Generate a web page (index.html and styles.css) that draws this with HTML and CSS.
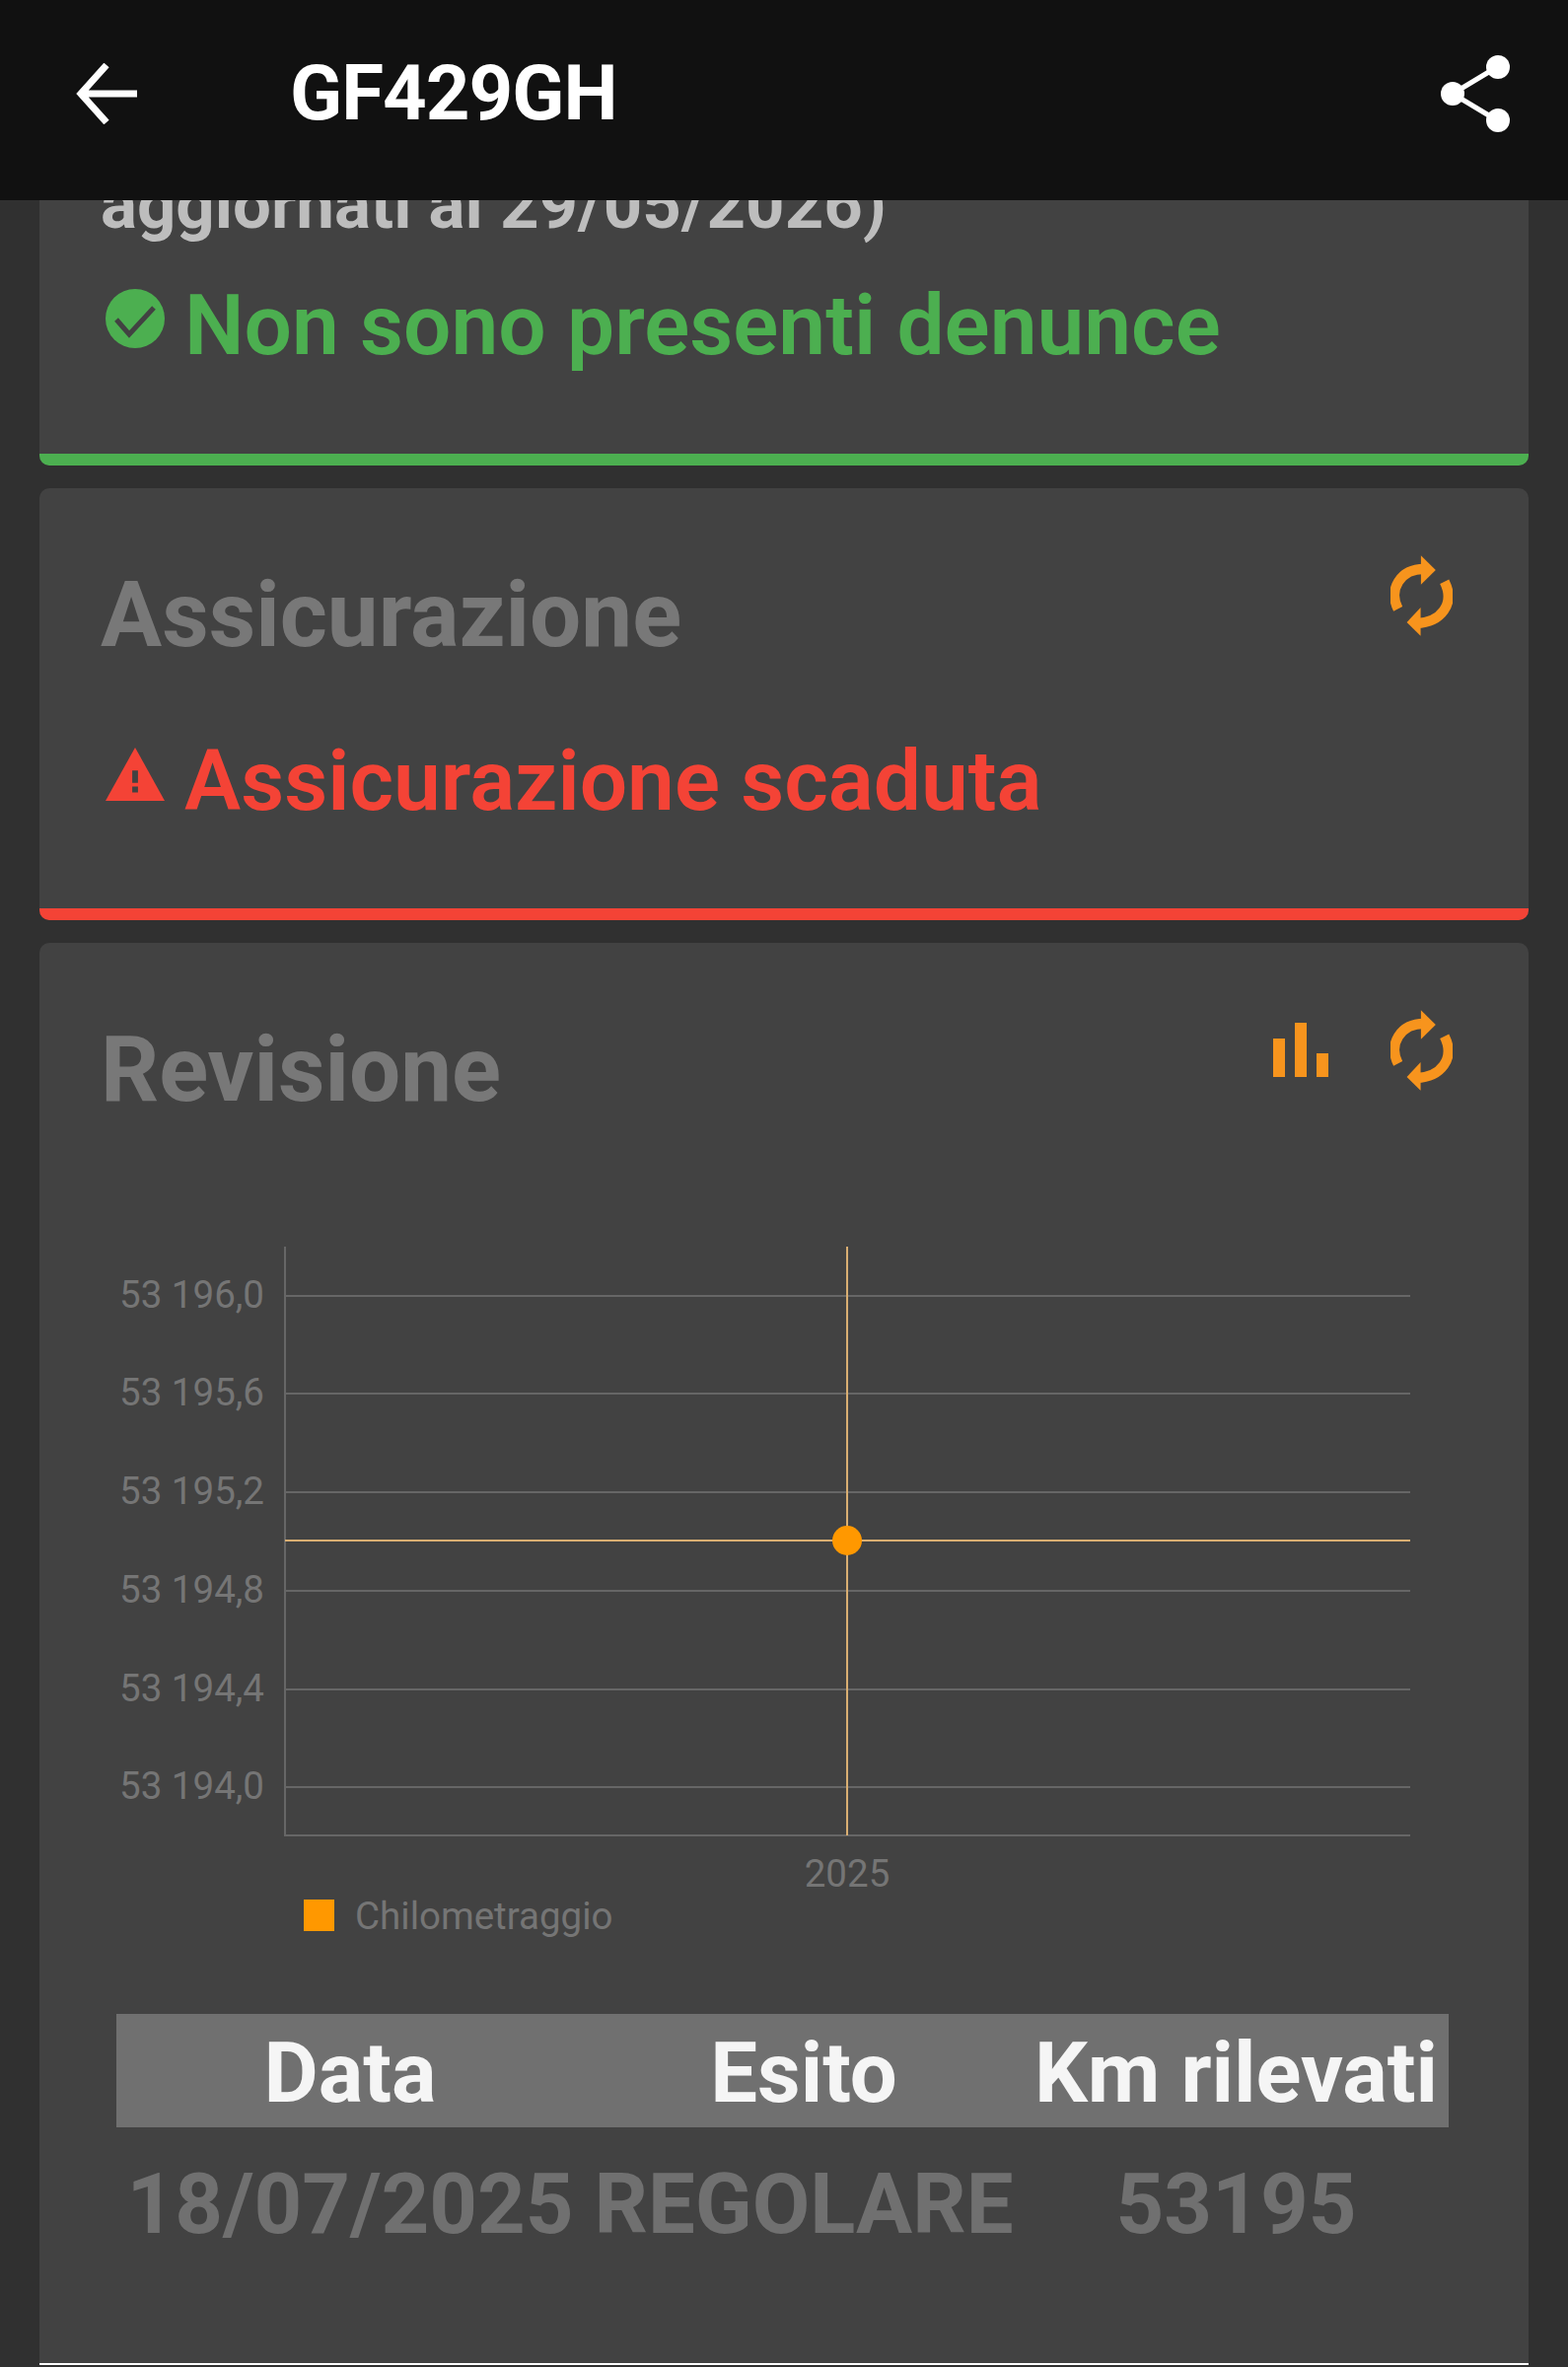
FILE: index.html
```html
<!DOCTYPE html>
<html lang="it">
<head>
    <meta charset="UTF-8">
    <meta name="viewport" content="width=device-width, initial-scale=1.0">
    <title>GF429GH</title>
    <link rel="stylesheet" href="styles.css">
</head>
<body>
    <header class="top-bar">
        <svg class="icon-back" viewBox="0 0 62 62"><path d="M62 31H5M31 2L5 31l26 29" fill="none" stroke="#fff" stroke-width="7"/></svg>
        <h1 class="plate">GF429GH</h1>
        <svg class="icon-share" viewBox="0 0 70 78">
            <path d="M57 12L12 39l45 27" fill="none" stroke="#fff" stroke-width="5"/>
            <circle cx="58" cy="12" r="12" fill="#fff"/>
            <circle cx="12" cy="39" r="12" fill="#fff"/>
            <circle cx="58" cy="66" r="12" fill="#fff"/>
        </svg>
    </header>

    <main class="cards">
        <!-- page is scrolled, first card is cut by the top bar -->
        <section class="card card-denunce">
            <p class="updated">aggiornati al 29/05/2026)</p>
            <div class="status status-ok">
                <svg class="status-icon" viewBox="0 0 60 60">
                    <ellipse cx="30" cy="30" rx="30" ry="30" fill="#4caf50"/>
                    <path d="M11 31l13 15 25-27" fill="none" stroke="#424242" stroke-width="5"/>
                </svg>
                <span>Non sono presenti denunce</span>
            </div>
            <div class="bar bar-green"></div>
        </section>

        <section class="card card-assicurazione">
            <div class="card-head">
                <h2>Assicurazione</h2>
                <svg class="icon-sync" viewBox="478 60 198 260">
                    <path d="M502 232C470 170 510 105 585 105" fill="none" stroke="#f7941d" stroke-width="32"/>
                    <path d="M575 62l47 46-47 47z" fill="#f7941d"/>
                    <path d="M650 145C685 215 640 275 560 278" fill="none" stroke="#f7941d" stroke-width="32"/>
                    <path d="M574 228l-44 47 44 43z" fill="#f7941d"/>
                </svg>
            </div>
            <div class="status status-bad">
                <svg class="status-icon" viewBox="0 0 62 56">
                    <path d="M31 0l31 56H0z" fill="#f44336"/>
                    <path d="M28 24h6v13h-6zM28 41h6v6h-6z" fill="#424242"/>
                </svg>
                <span>Assicurazione scaduta</span>
            </div>
            <div class="bar bar-red"></div>
        </section>

        <section class="card card-revisione">
            <div class="card-head">
                <h2>Revisione</h2>
                <svg class="icon-bars" viewBox="0 0 56 55">
                    <path d="M0 16h12v39H0zM22 0h12v55H22zM44 31h12v24H44z" fill="#f7941d"/>
                </svg>
                <svg class="icon-sync" viewBox="478 60 198 260">
                    <path d="M502 232C470 170 510 105 585 105" fill="none" stroke="#f7941d" stroke-width="32"/>
                    <path d="M575 62l47 46-47 47z" fill="#f7941d"/>
                    <path d="M650 145C685 215 640 275 560 278" fill="none" stroke="#f7941d" stroke-width="32"/>
                    <path d="M574 228l-44 47 44 43z" fill="#f7941d"/>
                </svg>
            </div>

            <svg class="chart" viewBox="0 0 1400 740">
                <g class="grid">
                    <path d="M209 50H1350M209 149H1350M209 249H1350M209 349H1350M209 449H1350M209 548H1350"/>
                    <path d="M209 0V597H1350"/>
                </g>
                <g class="y-labels">
                    <text x="188" y="62">53 196,0</text>
                    <text x="188" y="161">53 195,6</text>
                    <text x="188" y="261">53 195,2</text>
                    <text x="188" y="361">53 194,8</text>
                    <text x="188" y="461">53 194,4</text>
                    <text x="188" y="560">53 194,0</text>
                </g>
                <path class="cross" d="M209 298H1350M779 0V597"/>
                <circle cx="779" cy="298" r="15" fill="#ff9800"/>
                <text class="x-label" x="779" y="649">2025</text>
                <rect x="228" y="662" width="31" height="32" fill="#ff9800"/>
                <text class="legend-label" x="280" y="692">Chilometraggio</text>
            </svg>

            <table class="km-table">
                <thead>
                    <tr><th class="col-data">Data</th><th class="col-esito">Esito</th><th class="col-km">Km rilevati</th></tr>
                </thead>
                <tbody>
                    <tr><td>18/07/2025</td><td>REGOLARE</td><td>53195</td></tr>
                </tbody>
            </table>
            <div class="bar bar-white"></div>
        </section>
    </main>
</body>
</html>
```

FILE: styles.css
```css
/* dark theme page, Roboto everywhere */
html, body {
    margin: 0;
    height: 2400px;
    overflow: hidden;
    background-color: #303030;
    font-family: Roboto, "Liberation Sans", sans-serif;
}

.top-bar {
    height: 203px;
    background-color: #111;
    display: flex;
    align-items: center;
    padding: 0 59px 14px 77px;
    box-sizing: border-box;
}
.icon-back {
    width: 62px;
    height: 62px;
}
.plate {
    margin: 0 0 0 155px;
    flex: 1;
    color: #fff;
    font-size: 78px;
    line-height: 90px;
    font-weight: 700;
    letter-spacing: -1px;
}
.icon-share {
    width: 70px;
    height: 78px;
}

.cards {
    display: flex;
    flex-direction: column;
    gap: 23px;
    padding: 0 40px;
}
.card {
    background-color: #424242;
    border-radius: 0 0 10px 10px;
    overflow: hidden;
    display: flex;
    flex-direction: column;
}
.card-assicurazione, .card-revisione {
    border-radius: 10px;
}
.card-denunce { height: 269px; }
.card-assicurazione { height: 438px; }
.card-revisione { height: 1442px; border-radius: 10px 10px 0 0; }

.updated {
    margin: -40px 0 0 62px;
    height: 90px;
    color: #bdbdbd;
    font-size: 69px;
    line-height: 90px;
    font-weight: 700;
    white-space: nowrap;
}
.status {
    display: flex;
    align-items: center;
    gap: 20px;
    margin-left: 67px;
    font-size: 85.6px;
    line-height: 100px;
    font-weight: 600;
    white-space: nowrap;
}
.status-icon {
    width: 60px;
    height: 60px;
    margin-bottom: 14px;
}
.status-ok { color: #4caf50; margin-top: 27px; }
.status-bad { color: #f44336; margin-top: 65px; }

.bar {
    height: 12px;
    margin-top: auto;
}
.bar-green { background-color: #4caf50; }
.bar-red { background-color: #f44336; }
.bar-white { background-color: #fff; height: 2px; }

.card-head {
    display: flex;
    align-items: flex-start;
    padding: 66px 77px 0 62px;
}
.card-head h2 {
    margin: 10px 0 0;
    flex: 1;
    color: #787878;
    font-size: 92.5px;
    line-height: 106px;
    font-weight: 700;
}
.icon-sync {
    width: 63px;
    height: 86px;
}
.icon-bars {
    width: 56px;
    height: 55px;
    margin: 15px 63px 0 0;
}

.chart {
    display: block;
    width: 1400px;
    height: 740px;
    margin: 126px 0 0 40px;
}
.grid path {
    fill: none;
    stroke: #666;
    stroke-width: 2;
}
.cross {
    fill: none;
    stroke: #d9ae72;
    stroke-width: 2;
}
.y-labels text {
    fill: #757575;
    font-size: 38.5px;
    text-anchor: end;
}
.x-label {
    fill: #757575;
    font-size: 38.5px;
    text-anchor: middle;
}
.legend-label {
    fill: #757575;
    font-size: 38.5px;
}

.km-table {
    width: 1351px;
    margin: 38px 0 0 78px;
    border-collapse: collapse;
    table-layout: fixed;
    font-size: 85px;
    font-weight: 700;
}
.km-table th {
    height: 115px;
    padding: 5px 0 0;
    box-sizing: border-box;
    background-color: #707070;
    color: #f5f5f5;
    font-weight: 700;
    white-space: nowrap;
}
.km-table td {
    height: 156px;
    padding: 0;
    color: #707070;
    text-align: center;
    white-space: nowrap;
}
.col-data { width: 474px; }
.col-esito { width: 446px; }
```
